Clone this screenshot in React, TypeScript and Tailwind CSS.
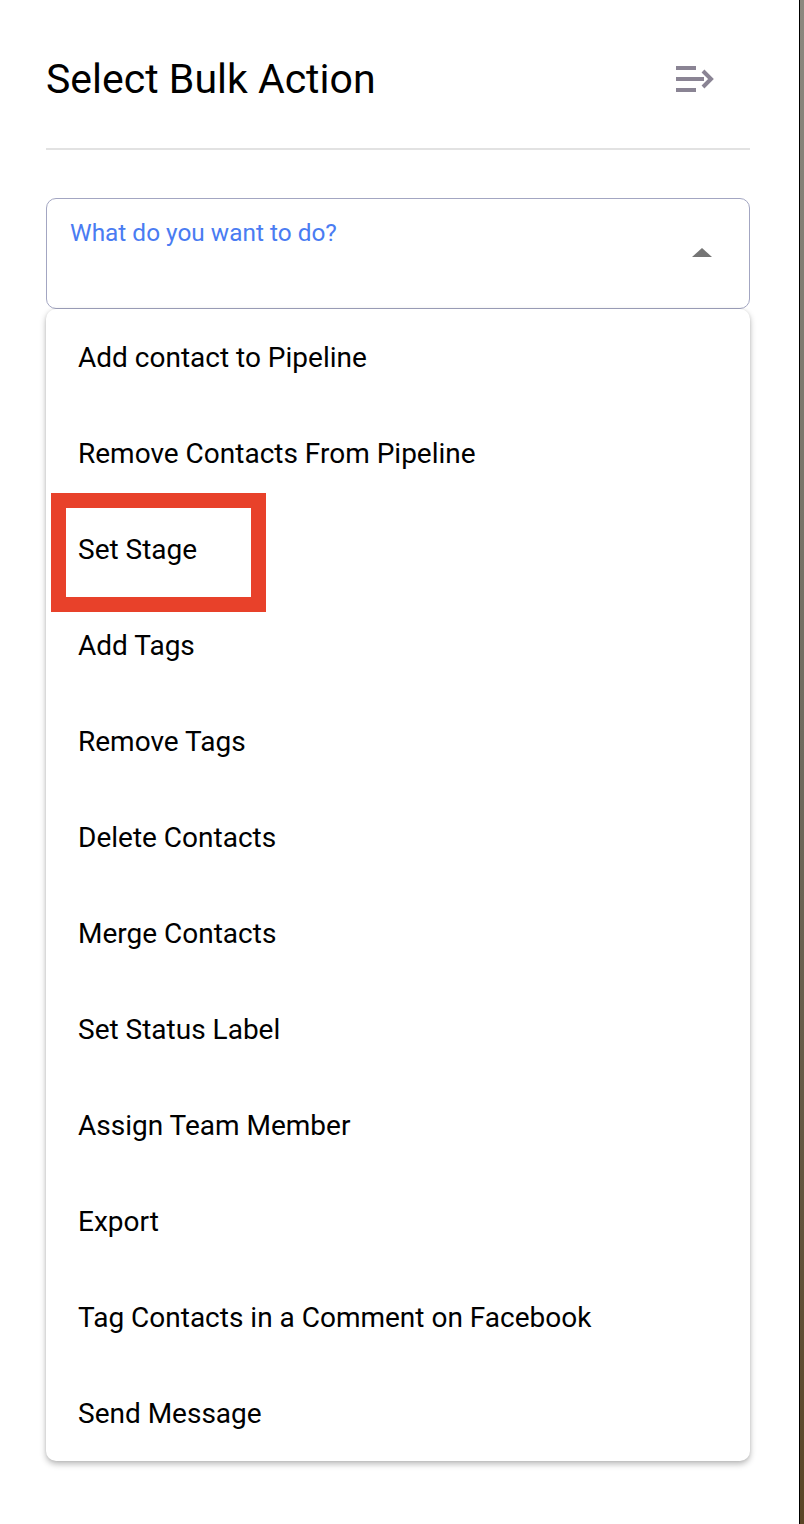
import React from "react";

const actions = [
  "Add contact to Pipeline",
  "Remove Contacts From Pipeline",
  "Set Stage",
  "Add Tags",
  "Remove Tags",
  "Delete Contacts",
  "Merge Contacts",
  "Set Status Label",
  "Assign Team Member",
  "Export",
  "Tag Contacts in a Comment on Facebook",
  "Send Message",
];

function CollapseIcon() {
  return (
    <svg width="40" height="32" viewBox="0 0 40 32" fill="none">
      <path d="M2 5h20M2 16h28M2 27h20" stroke="#8a8494" strokeWidth="4" />
      <path d="M29 8l8 8-8 8" stroke="#8a8494" strokeWidth="4" />
    </svg>
  );
}

export default function App() {
  return (
    <div className="flex h-[1524px] w-[804px] bg-white" style={{ fontFamily: "Roboto, 'Noto Sans', sans-serif" }}>
      <div className="flex-1 pl-[46px] pr-[49px]">
        <div className="flex h-[148px] items-center justify-between pt-[10px] pr-[36px]">
          <h1 className="text-[41px] leading-none font-normal text-black">Select Bulk Action</h1>
          <CollapseIcon />
        </div>
        <div className="h-[2px] bg-[#e2e2e2]" />

        <div className="mt-[48px] h-[111px] rounded-[10px] border border-[#a3a6c2] pl-[23px] pr-[37px] pt-[18px]">
          <div className="flex items-start justify-between">
            <span className="text-[24.4px] leading-[32px] text-[#4a7cf2]">What do you want to do?</span>
            <span className="mt-[31px] h-0 w-0 border-x-[10px] border-b-[9px] border-x-transparent border-b-[#757575]" />
          </div>
        </div>

        <div className="relative rounded-[10px] bg-white shadow-[0_3px_6px_rgba(0,0,0,0.28),0_0_3px_rgba(0,0,0,0.08)]">
          {actions.map((a) => (
            <div key={a} className="flex h-[96px] items-center px-[32px] pt-[2px] text-[28px] text-black">
              {a}
            </div>
          ))}
          <div className="absolute left-[5px] top-[184px] h-[119px] w-[215px] border-[15px] border-[#e8412a]" />
        </div>
      </div>
      <div className="w-[5px] border-l border-black bg-gradient-to-b from-[#8c887f] via-[#6f6a5e] to-[#5a4526]" />
    </div>
  );
}
